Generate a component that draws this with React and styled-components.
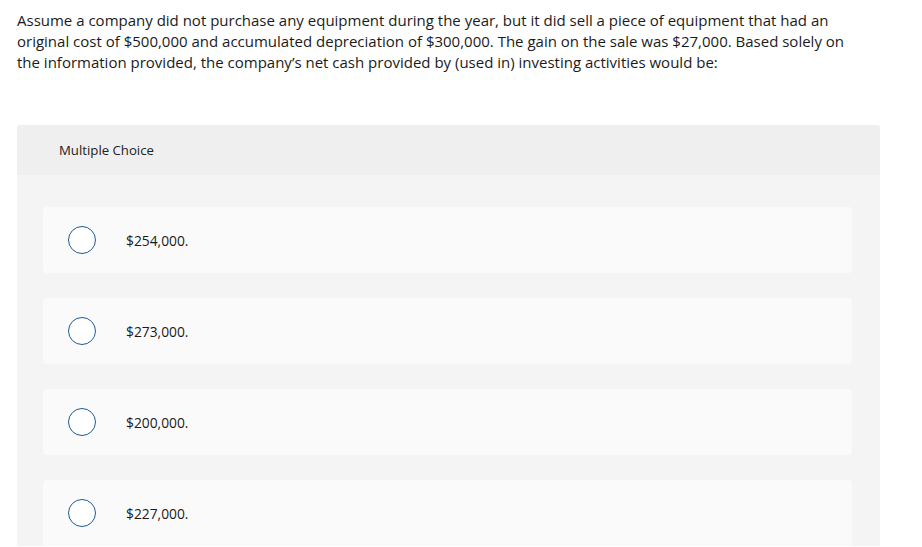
import React from "react";
import styled, { createGlobalStyle } from "styled-components";

const Global = createGlobalStyle`
  html, body { margin: 0; padding: 0; background: #fff; }
  body { font-family: "Open Sans", Lato, sans-serif; color: #1a1a1a; }
`;

const Page = styled.div`
  padding: 10px 42px 0 17px;
`;

const Question = styled.p`
  margin: 0;
  font-size: 15px;
  line-height: 21px;
  color: #1b1b1b;
  white-space: nowrap;
`;

const Panel = styled.section`
  margin-top: 52px;
  background: #f4f4f4;
  border-radius: 3px 3px 0 0;
  overflow: hidden;
`;

const PanelHeader = styled.div`
  height: 50px;
  background: #efefef;
  display: flex;
  align-items: center;
  padding-left: 42px;
  font-size: 13.2px;
  color: #222;
`;

const Options = styled.div`
  display: flex;
  flex-direction: column;
  gap: 25px;
  padding: 32px 28px 0 26px;
`;

const Option = styled.label`
  height: 66px;
  background: #fafafa;
  border-radius: 4px;
  display: flex;
  align-items: center;
  padding-left: 25px;
  cursor: pointer;
`;

const Radio = styled.span`
  width: 26px;
  height: 26px;
  border: 1.5px solid #1d5b96;
  border-radius: 50%;
  background: #fff;
  flex: none;
`;

const OptionText = styled.span`
  margin-left: 30px;
  font-size: 13.8px;
  color: #1b1b1b;
`;

const choices = ["$254,000.", "$273,000.", "$200,000.", "$227,000."];

export default function App() {
  return (
    <>
      <Global />
      <Page>
        <Question>
          Assume a company did not purchase any equipment during the year, but it did sell a piece of equipment that had an
          <br />
          original cost of $500,000 and accumulated depreciation of $300,000. The gain on the sale was $27,000. Based solely on
          <br />
          the information provided, the company’s net cash provided by (used in) investing activities would be:
        </Question>
        <Panel>
          <PanelHeader>Multiple Choice</PanelHeader>
          <Options>
            {choices.map((c) => (
              <Option key={c}>
                <Radio />
                <OptionText>{c}</OptionText>
              </Option>
            ))}
          </Options>
        </Panel>
      </Page>
    </>
  );
}
